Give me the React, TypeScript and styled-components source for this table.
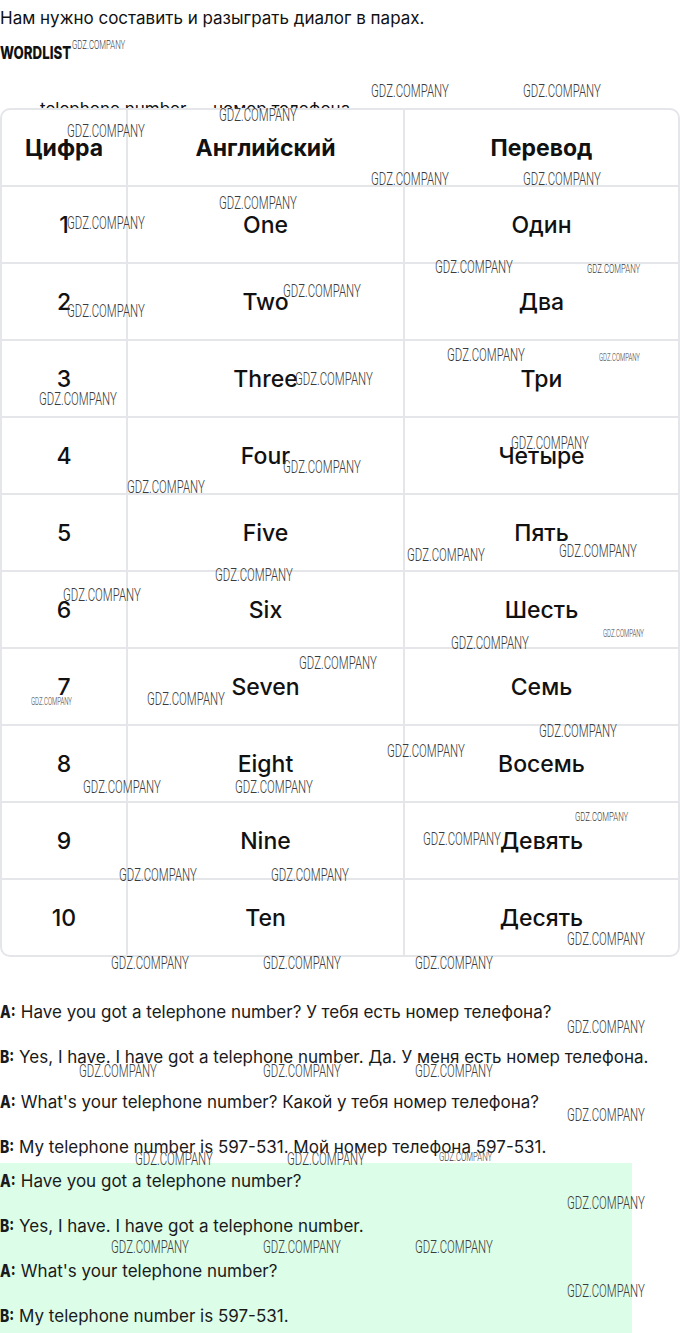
import * as React from "react";
import styled, { createGlobalStyle } from "styled-components";

const GlobalStyle = createGlobalStyle`
  html, body {
    margin: 0;
    padding: 0;
    background: #ffffff;
  }
  body {
    font-family: Inter, "Noto Sans", Roboto, sans-serif;
    color: #111111;
  }
`;

const Page = styled.div`
  position: relative;
  width: 680px;
  padding-top: 6px;
  overflow: hidden;
`;

const Intro = styled.p`
  margin: 0;
  font-size: 17px;
  line-height: 24px;
`;

const SectionTitle = styled.h4`
  margin: 11px 0 0;
  font-size: 17px;
  line-height: 24px;
  font-weight: 800;
  text-transform: uppercase;
  span {
    display: inline-block;
    transform: scaleX(0.78);
    transform-origin: left center;
  }
`;

const WordList = styled.ul`
  margin: 32px 0 0;
  padding: 0 0 0 40px;
  list-style: none;
  font-size: 17px;
  line-height: 24px;
`;

const WordTable = styled.div`
  position: relative;
  margin-top: -13px;
  display: grid;
  grid-template-columns: 126px 277px 1fr;
  border: 2px solid #e4e6ea;
  border-radius: 10px;
  background: #ffffff;
  overflow: hidden;
`;

const Cell = styled.div<{ $head?: boolean; $lastCol?: boolean; $lastRow?: boolean }>`
  height: 75px;
  display: flex;
  align-items: center;
  justify-content: center;
  font-size: 23px;
  font-weight: ${(p) => (p.$head ? 700 : 500)};
  color: #111111;
  border-right: ${(p) => (p.$lastCol ? "none" : "2px solid #e4e6ea")};
  border-bottom: ${(p) => (p.$lastRow ? "none" : "2px solid #e4e6ea")};
`;

const Dialog = styled.div`
  margin-top: 43px;
  display: flex;
  flex-direction: column;
  gap: 21px;
`;

const Line = styled.p`
  margin: 0;
  font-size: 17px;
  line-height: 24px;
  color: #1a1a1a;
`;

const Speaker = styled.b`
  font-weight: 800;
  display: inline-block;
  transform: scaleX(0.82);
  transform-origin: left center;
  margin-right: -3px;
`;

const Answer = styled.div`
  margin-top: 4px;
  width: 632px;
  padding: 6px 0 24px;
  background: #dcfde8;
  display: flex;
  flex-direction: column;
  gap: 21px;
`;

const sizes = { md: 19, sm: 13, xs: 10 };

const Watermark = styled.span<{ $x: number; $y: number; $s: keyof typeof sizes }>`
  position: absolute;
  left: ${(p) => p.$x}px;
  top: ${(p) => p.$y - sizes[p.$s] / 2 - 1}px;
  font-family: Roboto, "DejaVu Sans", sans-serif;
  font-weight: 300;
  font-size: ${(p) => sizes[p.$s]}px;
  line-height: 1;
  color: #3a3a3a;
  white-space: nowrap;
  transform: scaleX(0.6);
  transform-origin: left center;
  pointer-events: none;
`;

const rows: [string, string, string][] = [
  ["1", "One", "Один"],
  ["2", "Two", "Два"],
  ["3", "Three", "Три"],
  ["4", "Four", "Четыре"],
  ["5", "Five", "Пять"],
  ["6", "Six", "Шесть"],
  ["7", "Seven", "Семь"],
  ["8", "Eight", "Восемь"],
  ["9", "Nine", "Девять"],
  ["10", "Ten", "Десять"],
];

const marks: [number, number, keyof typeof sizes][] = [
  [72, 45, "sm"],
  [371, 91, "md"], [523, 91, "md"],
  [219, 115, "md"], [67, 131, "md"],
  [371, 179, "md"], [523, 179, "md"],
  [219, 203, "md"], [67, 223, "md"],
  [435, 267, "md"], [587, 269, "sm"],
  [283, 291, "md"], [67, 311, "md"],
  [447, 355, "md"], [599, 359, "xs"],
  [295, 379, "md"], [39, 399, "md"],
  [511, 443, "md"], [283, 467, "md"], [127, 487, "md"],
  [407, 555, "md"], [559, 551, "md"],
  [215, 575, "md"], [63, 595, "md"],
  [451, 643, "md"], [603, 635, "xs"],
  [299, 663, "md"], [31, 703, "xs"], [147, 699, "md"],
  [539, 731, "md"], [387, 751, "md"],
  [83, 787, "md"], [235, 787, "md"],
  [575, 817, "sm"], [423, 839, "md"],
  [119, 875, "md"], [271, 875, "md"],
  [567, 939, "md"],
  [111, 963, "md"], [263, 963, "md"], [415, 963, "md"],
  [567, 1027, "md"],
  [79, 1071, "md"], [263, 1071, "md"], [415, 1071, "md"],
  [567, 1115, "md"],
  [135, 1159, "md"], [287, 1159, "md"], [439, 1157, "sm"],
  [567, 1203, "md"],
  [111, 1247, "md"], [263, 1247, "md"], [415, 1247, "md"],
  [567, 1291, "md"],
];

export default function App() {
  return (
    <>
      <GlobalStyle />
      <Page>
        <Intro>Нам нужно составить и разыграть диалог в парах.</Intro>
        <SectionTitle>
          <span>Wordlist</span>
        </SectionTitle>
        <WordList>
          <li>telephone number — номер телефона</li>
        </WordList>

        <WordTable>
          <Cell $head>Цифра</Cell>
          <Cell $head>Английский</Cell>
          <Cell $head $lastCol>
            Перевод
          </Cell>
          {rows.map((r, i) => {
            const last = i === rows.length - 1;
            return (
              <React.Fragment key={r[0]}>
                <Cell $lastRow={last}>{r[0]}</Cell>
                <Cell $lastRow={last}>{r[1]}</Cell>
                <Cell $lastRow={last} $lastCol>
                  {r[2]}
                </Cell>
              </React.Fragment>
            );
          })}
        </WordTable>

        <Dialog>
          <Line>
            <Speaker>A:</Speaker> Have you got a telephone number? У тебя есть номер телефона?
          </Line>
          <Line>
            <Speaker>B:</Speaker> Yes, I have. I have got a telephone number. Да. У меня есть номер телефона.
          </Line>
          <Line>
            <Speaker>A:</Speaker> What's your telephone number? Какой у тебя номер телефона?
          </Line>
          <Line>
            <Speaker>B:</Speaker> My telephone number is 597-531. Мой номер телефона 597-531.
          </Line>
        </Dialog>

        <Answer>
          <Line>
            <Speaker>A:</Speaker> Have you got a telephone number?
          </Line>
          <Line>
            <Speaker>B:</Speaker> Yes, I have. I have got a telephone number.
          </Line>
          <Line>
            <Speaker>A:</Speaker> What's your telephone number?
          </Line>
          <Line>
            <Speaker>B:</Speaker> My telephone number is 597-531.
          </Line>
        </Answer>

        {marks.map(([x, y, s], i) => (
          <Watermark key={i} $x={x} $y={y} $s={s}>
            GDZ.COMPANY
          </Watermark>
        ))}
      </Page>
    </>
  );
}
